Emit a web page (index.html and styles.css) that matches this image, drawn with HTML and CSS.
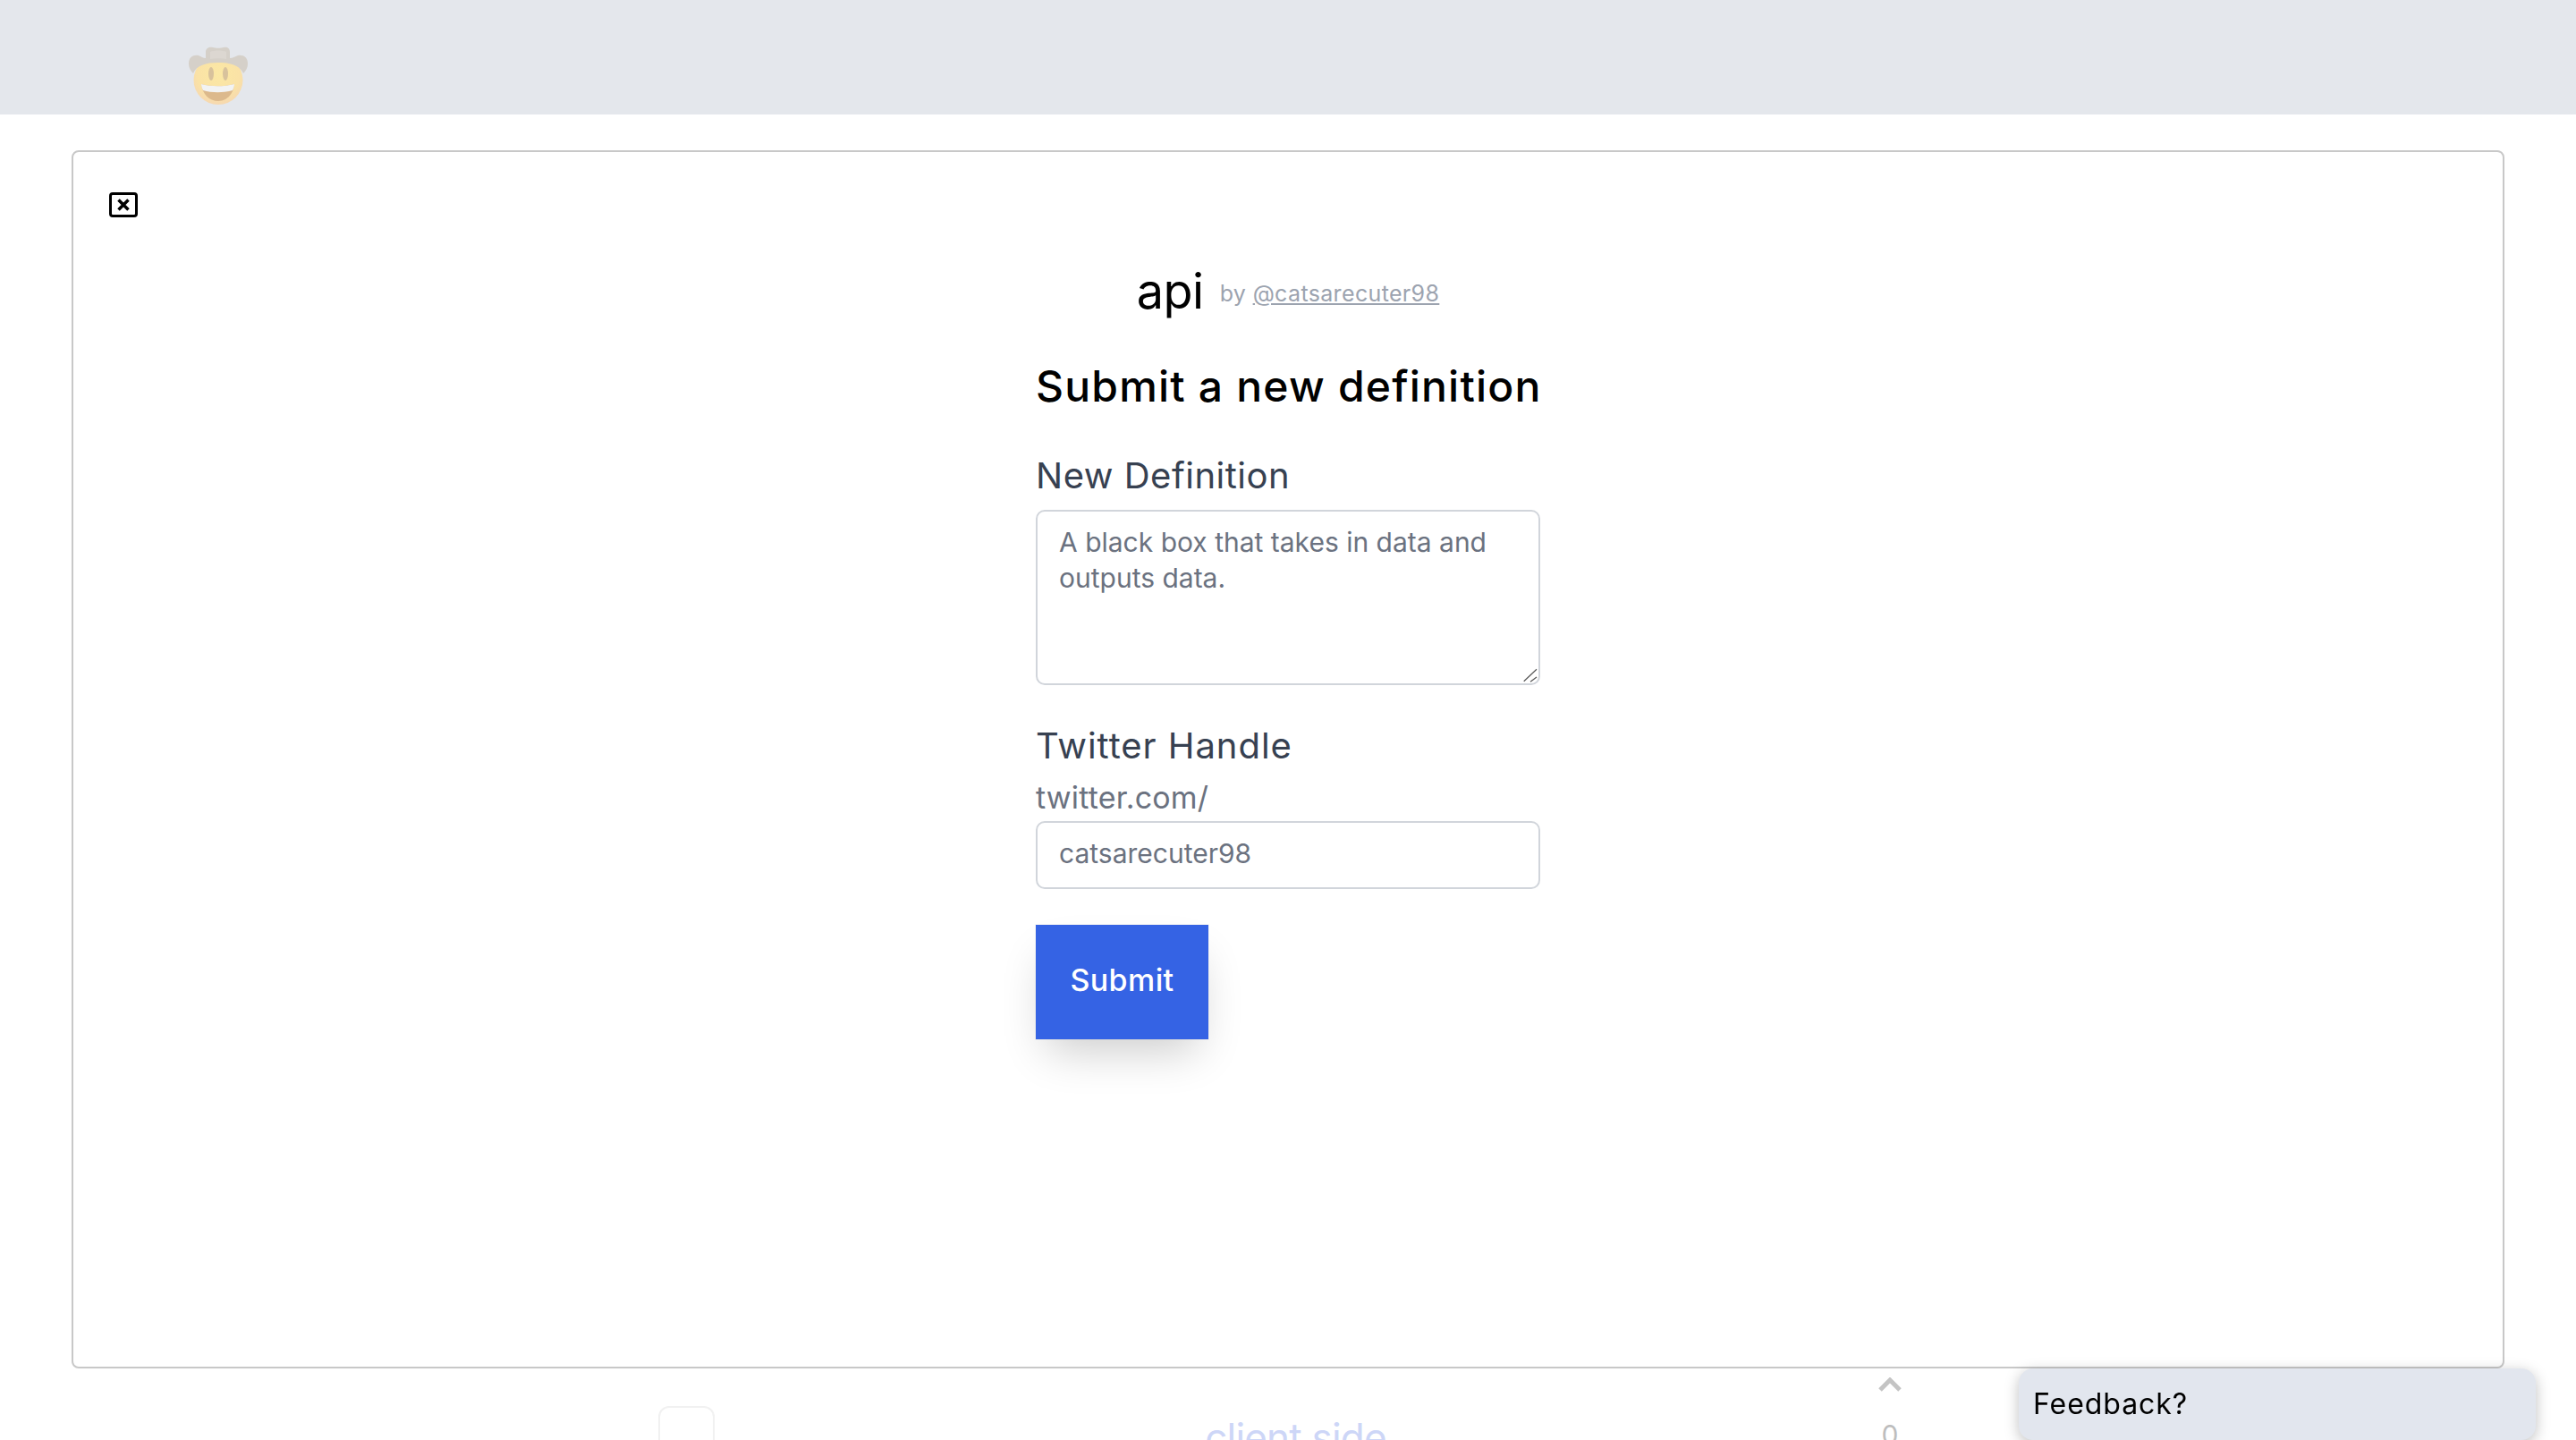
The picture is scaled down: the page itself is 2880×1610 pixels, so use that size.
FILE: index.html
```html
<!DOCTYPE html>
<html lang="en">
<head>
<meta charset="utf-8">
<title>Submit a new definition</title>
<link rel="stylesheet" href="styles.css">
</head>
<body>
<header class="topbar">
  <svg class="avatar" viewBox="0 0 66 66" aria-hidden="true">
    <defs>
      <radialGradient id="face" cx="50%" cy="38%" r="62%">
        <stop offset="0%" stop-color="#fbe8a4"/>
        <stop offset="70%" stop-color="#fae2a6"/>
        <stop offset="100%" stop-color="#f6d8b0"/>
      </radialGradient>
    </defs>
    <circle cx="33" cy="37.5" r="27.5" fill="url(#face)"/>
    <path d="M0 19C0 12 5 9 11 10C14 11 16 13 19 13L19 6C19 1 24 0 27 1C30 2 36 2 39 1C42 0 46 1 46 6L46 13C49 13 52 11 55 10C61 9 66 12 66 19C66 24 64 27 61 30C57 21 47 18 33 18C19 18 9 21 5 30C2 27 0 24 0 19Z" fill="#d5d0c9"/>
    <path d="M24 6C28 4 38 4 42 6L42 14C36 13 30 13 24 14Z" fill="#dcd7d1"/>
    <ellipse cx="25" cy="30.5" rx="3" ry="7.5" fill="#d8c29c"/>
    <ellipse cx="41" cy="30.5" rx="3" ry="7.5" fill="#d8c29c"/>
    <path d="M14 42C25 45 40 45 51 42C50 53 43 61 33 61C23 61 15 53 14 42Z" fill="#dcb98c"/>
    <path d="M14 42C25 45 40 45 51 42C51 45 50 47 49 49C39 52 26 52 16 49C15 47 14 45 14 42Z" fill="#f2f3f3"/>
  </svg>
</header>

<main class="feed">
  <article class="entry">
    <div class="thumb"></div>
    <h2 class="entry-title">client side</h2>
    <div class="votes">
      <svg class="chevron" viewBox="0 0 28 16" aria-hidden="true"><path d="M3 14L14 3L25 14"/></svg>
      <span class="count">0</span>
    </div>
  </article>
</main>

<section class="modal">
  <button class="close" type="button" aria-label="Close">
    <svg viewBox="0 0 32 28" aria-hidden="true">
      <rect x="1.5" y="1.5" width="29" height="25" rx="2.5"/>
      <path d="M10.5 8.5L21.5 19.5M21.5 8.5L10.5 19.5"/>
    </svg>
  </button>
  <div class="term">
    <span class="term-name">api</span>
    <span class="term-by">by <a href="#" class="term-author">@catsarecuter98</a></span>
  </div>
  <form class="form">
    <h1 class="form-title">Submit a new definition</h1>
    <label class="label" for="def">New Definition</label>
    <div class="area-wrap">
      <textarea class="field field-area" id="def">A black box that takes in data and outputs data.</textarea>
      <svg class="grip" viewBox="0 0 16 16" aria-hidden="true"><path d="M.7 14.7L15 1.3M8 15.3L15 10"/></svg>
    </div>
    <label class="label label-second" for="handle">Twitter Handle</label>
    <div class="prefix">twitter.com/</div>
    <input class="field field-line" id="handle" type="text" value="catsarecuter98">
    <button class="submit" type="button">Submit</button>
  </form>
</section>

<aside class="feedback">Feedback?</aside>
</body>
</html>
```
FILE: styles.css
```css
* { box-sizing: border-box; }
html, body { margin: 0; height: 100%; }
html { overflow: hidden; }
body {
  position: relative;
  height: 1610px;
  overflow: hidden;
  background: #fff;
  font-family: Inter, "Liberation Sans", sans-serif;
  color: #000;
}
.topbar {
  height: 128px;
  background: #e4e7ec;
  padding: 52px 0 0 211px;
}
.avatar {
  display: block;
  width: 66px;
  height: 66px;
  filter: blur(.6px);
}
.feed { padding-top: 1412px; }
.entry {
  display: flex;
  width: 1392px;
  margin-left: 736px;
}
.thumb {
  width: 63px;
  height: 80px;
  margin-top: 32px;
  border: 2px solid #f1f1f1;
  border-radius: 12px;
}
.entry-title {
  flex: 1;
  margin: 37px 0 0;
  text-align: center;
  font-size: 44px;
  font-weight: 400;
  letter-spacing: -.8px;
  line-height: 60px;
  color: #cdd6f7;
}
.votes {
  width: 30px;
  display: flex;
  flex-direction: column;
  align-items: center;
}
.chevron {
  width: 28px;
  height: 16px;
  fill: none;
  stroke: #c4c4c4;
  stroke-width: 5;
}
.count {
  margin-top: 26px;
  font-size: 30px;
  line-height: 44px;
  color: #bdbdbd;
}
.modal {
  position: absolute;
  top: 168px;
  left: 80px;
  width: 2720px;
  height: 1362px;
  padding: 45px 40px 0;
  background: #fff;
  border: 2px solid #c8c8c8;
  border-radius: 8px;
}
.close {
  display: block;
  width: 32px;
  height: 28px;
  padding: 0;
  border: 0;
  background: none;
}
.close svg {
  display: block;
  width: 32px;
  height: 28px;
  fill: none;
  stroke: #000;
  stroke-width: 3;
}
.close path { stroke-width: 3.5; }
.term {
  display: flex;
  justify-content: center;
  align-items: flex-start;
  gap: 18px;
  height: 72px;
  margin-top: 47px;
  line-height: 72px;
}
.term-name { font-size: 54px; letter-spacing: -.5px; }
.term-by { font-size: 25px; letter-spacing: .35px; margin-top: 2px; color: #9ca3af; }
.term-author { color: inherit; }
.form {
  width: 564px;
  margin: 0 auto;
}
.form-title {
  margin: 34px 0 0;
  font-size: 48px;
  font-weight: 450;
  letter-spacing: 1.2px;
  line-height: 72px;
  white-space: nowrap;
}
.label {
  display: block;
  margin: 36px 0 10px;
  font-size: 40px;
  letter-spacing: .5px;
  line-height: 56px;
  color: #374151;
}
.label-second {
  margin: 40px 0 6px;
  letter-spacing: .95px;
}
.prefix {
  margin-bottom: 2px;
  font-size: 34px;
  letter-spacing: .2px;
  line-height: 48px;
  color: #6b7280;
}
.area-wrap { position: relative; }
.grip {
  position: absolute;
  right: 3px;
  bottom: 3px;
  width: 16px;
  height: 16px;
  fill: none;
  stroke: #555;
  stroke-width: 1.2;
  pointer-events: none;
}
.field {
  display: block;
  width: 100%;
  margin: 0;
  padding: 14px 24px;
  border: 2px solid #d1d5db;
  border-radius: 10px;
  background: #fff;
  font-family: inherit;
  font-size: 30px;
  line-height: 40px;
  color: #6b7280;
  outline: 0;
}
.field-area {
  height: 196px;
  resize: none;
}
.field-line {
  height: 76px;
  padding-top: 14px;
  padding-bottom: 18px;
}
.submit {
  display: block;
  width: 193px;
  height: 128px;
  margin-top: 40px;
  padding: 0 0 6px;
  border: 0;
  background: #3563e4;
  font-family: inherit;
  font-size: 34px;
  font-weight: 450;
  letter-spacing: .4px;
  color: #fff;
  box-shadow: 0 25px 50px -12px rgba(0,0,0,.2), 0 0 0 1px rgba(0,0,0,.03);
}
.feedback {
  position: fixed;
  right: 45px;
  bottom: 0;
  width: 578px;
  height: 80px;
  padding: 20px 16px 0;
  background: #e2e6ee;
  border-radius: 16px;
  box-shadow: 0 4px 16px rgba(0,0,0,.25);
  font-size: 32px;
  letter-spacing: .95px;
  line-height: 40px;
}
```
